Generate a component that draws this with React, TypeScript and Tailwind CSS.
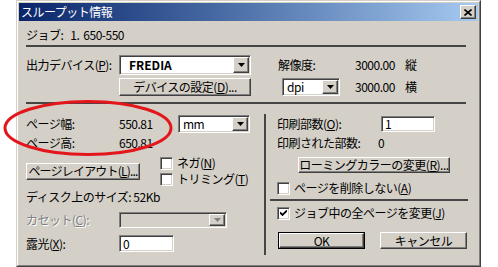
import type { ReactNode } from "react";

const raised =
  "border border-t-white border-l-white border-r-[#404040] border-b-[#404040] shadow-[inset_-1px_-1px_0_#808080]";
const sunken =
  "border border-t-[#808080] border-l-[#808080] border-r-white border-b-white shadow-[inset_1px_1px_0_#404040,inset_-1px_-1px_0_#d4d0c8]";

// Win2000 style push button
const Button = ({ children, className = "", isDefault = false }: { children: ReactNode; className?: string; isDefault?: boolean }) => (
  <div className={`${isDefault ? "border border-black" : ""} ${className} flex`}>
    <div className={`${raised} bg-[#d4d0c8] flex-1 flex items-center justify-center overflow-hidden leading-[12px]`}>
      <span className="whitespace-nowrap">{children}</span>
    </div>
  </div>
);

const Arrow = ({ disabled = false }: { disabled?: boolean }) => (
  <div className={`${raised} bg-[#d4d0c8] w-[16px] h-full flex items-center justify-center`}>
    <svg width="7" height="4" viewBox="0 0 7 4">
      <path d="M0 0h7L3.5 4z" fill={disabled ? "#808080" : "#000"} />
    </svg>
  </div>
);

// Drop-down combo box
const Combo = ({ value, className = "", disabled = false, bold = false }: { value?: string; className?: string; disabled?: boolean; bold?: boolean }) => (
  <div className={`${sunken} ${disabled ? "bg-[#d4d0c8]" : "bg-white"} ${className} flex p-[1px]`}>
    <div className={`flex-1 flex items-center pl-[3px] ${bold ? "font-bold pl-[8px] tracking-normal" : ""}`}>{value}</div>
    <Arrow disabled={disabled} />
  </div>
);

const Input = ({ value, className = "" }: { value: string; className?: string }) => (
  <div className={`${sunken} bg-white ${className} flex items-center pl-[3px]`}>{value}</div>
);

const CheckBox = ({ label, checked = false }: { label: ReactNode; checked?: boolean }) => (
  <div className="flex items-center h-[16px]">
    <div className={`${sunken} bg-white w-[13px] h-[13px] flex items-center justify-center`}>
      {checked && (
        <svg width="7" height="7" viewBox="0 0 7 7">
          <path d="M0 2.5l2.5 2.5L7 0.5" stroke="#000" strokeWidth="1.8" fill="none" />
        </svg>
      )}
    </div>
    <span className="ml-[4px] whitespace-nowrap">{label}</span>
  </div>
);

const Sep = ({ className = "" }: { className?: string }) => <div className={`h-[2px] bg-[#454545] ${className}`} />;

export default function App() {
  return (
    <div className="relative w-[498px] h-[267px] bg-white overflow-hidden text-[12px] leading-[14px] tracking-[-0.5px] text-black font-['Noto_Sans_CJK_JP','Liberation_Sans',sans-serif]">
      {/* dialog window */}
      <div className="ml-[16px] w-[465px] h-[267px] border border-t-[#d4d0c8] border-l-[#d4d0c8] border-r-[#404040] border-b-[#404040]">
        <div className="h-full border border-t-white border-l-white border-r-[#808080] border-b-[#808080] bg-[#d4d0c8] p-[1px] flex flex-col">
          {/* title bar */}
          <div className="h-[18px] bg-gradient-to-r from-[#0a246a] to-[#a6caf0] flex items-center pl-[2px] pr-[2px]">
            <span className="text-white text-[12px] flex-1">スループット情報</span>
            <div className={`${raised} bg-[#d4d0c8] w-[16px] h-[14px] flex items-center justify-center`}>
              <svg width="8" height="7" viewBox="0 0 8 7">
                <path d="M0.5 0.5l7 6M7.5 0.5l-7 6" stroke="#000" strokeWidth="1.6" />
              </svg>
            </div>
          </div>

          {/* job line */}
          <div className="h-[24px] pt-[4px] pl-[7px] flex items-center">
            <span>ジョブ:</span>
            <span className="ml-[7px]">1.</span>
            <span className="ml-[4px]">650-550</span>
          </div>
          <Sep className="ml-[7px] w-[440px]" />

          {/* device / resolution */}
          <div className="pl-[7px]">
            <div className="mt-[8px] h-[20px] flex items-center">
              <span className="w-[93px]">出力デバイス(<u>P</u>):</span>
              <Combo value="FREDIA" bold className="w-[132px] h-[20px]" />
              <span className="ml-[27px] w-[77px]">解像度:</span>
              <span className="w-[50px]">3000.00</span>
              <span>縦</span>
            </div>
            <div className="mt-[3px] h-[18px] flex items-center">
              <Button className="ml-[93px] w-[132px] h-[18px]">
                デバイスの設定(<u>D</u>)...
              </Button>
              <Combo value="dpi" className="ml-[31px] w-[58px] h-[18px]" />
              <span className="ml-[15px] w-[50px]">3000.00</span>
              <span>横</span>
            </div>
          </div>
          <Sep className="mt-[6px] ml-[7px] w-[440px]" />

          {/* two columns */}
          <div className="mt-[10px] flex">
            {/* left column */}
            <div className="w-[245px] pl-[7px]">
              <div className="mt-[1px] h-[18px] flex items-center">
                <span className="w-[93px]">ページ幅:</span>
                <span className="w-[59px]">550.81</span>
                <Combo value="mm" className="w-[72px] h-[18px]" />
              </div>
              <div className="mt-[1px] h-[18px] flex items-center">
                <span className="w-[93px]">ページ高:</span>
                <span>650.81</span>
              </div>
              <div className="mt-[3px] flex items-center">
                <Button className="w-[114px] h-[17px] tracking-[-0.8px]">
                  ページレイアウト(<u>L</u>)...
                </Button>
                <div className="ml-[20px] flex flex-col">
                  <CheckBox label={<>ネガ(<u>N</u>)</>} />
                  <CheckBox label={<>トリミング(<u>T</u>)</>} />
                </div>
              </div>
              <div className="mt-[2px] h-[16px] flex items-center">ディスク上のサイズ: 52Kb</div>
              <div className="mt-[7px] h-[16px] flex items-center">
                <span className="w-[93px] text-[#808080] [text-shadow:1px_1px_0_#fff]">
                  カセット(<u>C</u>):
                </span>
                <Combo disabled className="w-[108px] h-[16px]" />
              </div>
              <div className="mt-[7px] h-[17px] flex items-center">
                <span className="w-[93px]">
                  露光(<u>X</u>):
                </span>
                <Input value="0" className="w-[55px] h-[17px]" />
              </div>
            </div>

            {/* vertical divider */}
            <div className="w-[2px] h-[141px] bg-[#454545]" />

            {/* right column */}
            <div className="pl-[11px] w-[212px]">
              <div className="mt-[1px] h-[17px] flex items-center">
                <span className="w-[104px]">
                  印刷部数(<u>O</u>):
                </span>
                <Input value="1" className="w-[54px] h-[16px]" />
              </div>
              <div className="mt-[2px] h-[18px] flex items-center">
                <span className="w-[101px]">印刷された部数:</span>
                <span>0</span>
              </div>
              <Button className="mt-[5px] ml-[21px] w-[152px] h-[16px]">
                ローミングカラーの変更(<u>R</u>)...
              </Button>
              <div className="mt-[7px]">
                <CheckBox label={<>ページを削除しない(<u>A</u>)</>} />
              </div>
              <Sep className="mt-[3px] -ml-[7px] w-[198px]" />
              <div className="mt-[4px]">
                <CheckBox checked label={<>ジョブ中の全ページを変更(<u>J</u>)</>} />
              </div>
              <div className="mt-[11px] flex gap-[15px] ml-[1px]">
                <Button isDefault className="w-[87px] h-[17px]">
                  OK
                </Button>
                <Button className="w-[87px] h-[17px]">キャンセル</Button>
              </div>
            </div>
          </div>
        </div>
      </div>

      {/* red annotation ellipse */}
      <svg className="absolute left-[2px] top-[99px]" width="172" height="58" viewBox="0 0 172 58">
        <ellipse cx="86" cy="29" rx="83" ry="26.5" fill="none" stroke="#e3161b" strokeWidth="3" />
      </svg>
    </div>
  );
}
